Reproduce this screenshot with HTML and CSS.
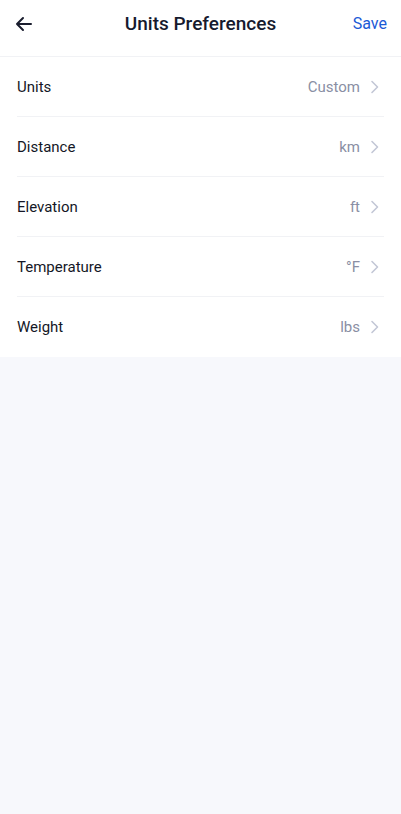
FILE: index.html
```html
<!DOCTYPE html>
<html>
<head>
<meta charset="utf-8">
<link rel="stylesheet" href="styles.css">
</head>
<body>
<div class="app">
  <header class="header">
    <button class="back" aria-label="Back">
      <svg width="20" height="20" viewBox="0 0 20 20" fill="none" stroke="#1a1d2e" stroke-width="2" stroke-linecap="round" stroke-linejoin="round"><path d="M17 10H3M9 4l-6 6 6 6"/></svg>
    </button>
    <h1 class="title">Units Preferences</h1>
    <span class="save">Save</span>
  </header>
  <ul class="list">
    <li class="row"><span class="label">Units</span><span class="value">Custom</span><svg class="chev" width="9" height="14" viewBox="0 0 9 14" fill="none" stroke="#c3c7d6" stroke-width="1.6" stroke-linecap="round" stroke-linejoin="round"><path d="M2 1.5l5.5 5.5L2 12.5"/></svg></li>
    <li class="row"><span class="label">Distance</span><span class="value">km</span><svg class="chev" width="9" height="14" viewBox="0 0 9 14" fill="none" stroke="#c3c7d6" stroke-width="1.6" stroke-linecap="round" stroke-linejoin="round"><path d="M2 1.5l5.5 5.5L2 12.5"/></svg></li>
    <li class="row"><span class="label">Elevation</span><span class="value">ft</span><svg class="chev" width="9" height="14" viewBox="0 0 9 14" fill="none" stroke="#c3c7d6" stroke-width="1.6" stroke-linecap="round" stroke-linejoin="round"><path d="M2 1.5l5.5 5.5L2 12.5"/></svg></li>
    <li class="row"><span class="label">Temperature</span><span class="value">°F</span><svg class="chev" width="9" height="14" viewBox="0 0 9 14" fill="none" stroke="#c3c7d6" stroke-width="1.6" stroke-linecap="round" stroke-linejoin="round"><path d="M2 1.5l5.5 5.5L2 12.5"/></svg></li>
    <li class="row"><span class="label">Weight</span><span class="value">lbs</span><svg class="chev" width="9" height="14" viewBox="0 0 9 14" fill="none" stroke="#c3c7d6" stroke-width="1.6" stroke-linecap="round" stroke-linejoin="round"><path d="M2 1.5l5.5 5.5L2 12.5"/></svg></li>
  </ul>
</div>
</body>
</html>
```
FILE: styles.css
```css
* { box-sizing: border-box; }
html, body { margin: 0; padding: 0; }
body {
  font-family: Roboto, "Noto Sans", sans-serif;
  background: #f7f8fc;
  width: 401px;
  height: 814px;
}
.app { display: flex; flex-direction: column; }
.header {
  height: 57px;
  background: #fff;
  border-bottom: 1px solid #f1f2f5;
  display: grid;
  grid-template-columns: 60px 1fr 60px;
  align-items: center;
  padding-bottom: 9px;
}
.back {
  border: 0; background: none; padding: 0 0 0 14px;
  display: flex; align-items: center; justify-content: flex-start;
  height: 24px;
}
.title {
  margin: 0;
  text-align: center;
  font-size: 19px;
  font-weight: 500;
  color: #161a2e;
}
.save {
  font-size: 16px;
  color: #1a5ad6;
  text-align: right;
  padding-right: 14px;
}
.list {
  list-style: none;
  margin: 0;
  padding: 0 17px;
  background: #fff;
}
.row {
  height: 60px;
  display: flex;
  align-items: center;
  border-bottom: 1px solid #f1f2f5;
}
.row:last-child { border-bottom: 0; }
.label {
  flex: 1;
  font-size: 15px;
  color: #141726;
}
.value {
  font-size: 15px;
  color: #8a8fa4;
  margin-right: 10px;
}
.chev { margin-right: 5px; }
```
